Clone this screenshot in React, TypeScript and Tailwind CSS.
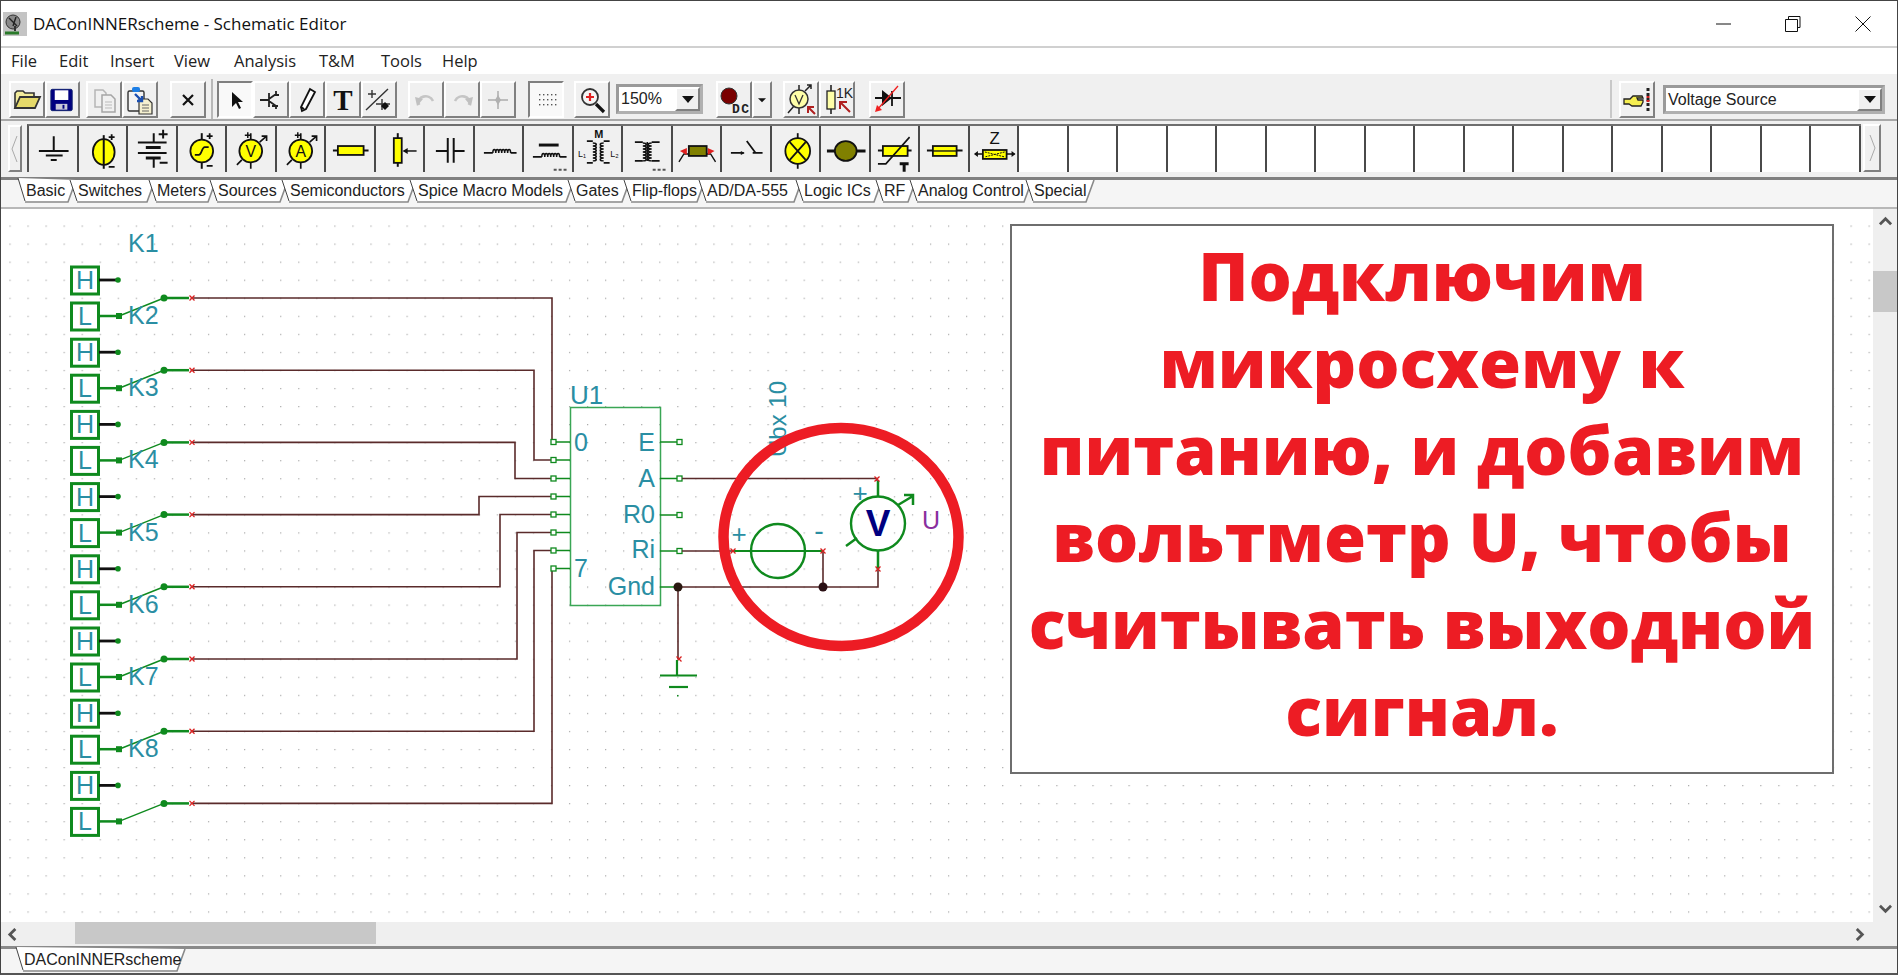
import React from "react";

const G = "#0f8a1e";
const T = "#2a8ea3";
const B = "#5a2b2b";
const Y = "#ffff00";
const K = "#111";

const Raised = "border-t-2 border-l-2 border-b-2 border-r-2 border-t-white border-l-white border-b-[#808080] border-r-[#808080] bg-[#f0f0f0]";
const Sunk = "border-t-2 border-l-2 border-b-2 border-r-2 border-t-[#808080] border-l-[#808080] border-b-white border-r-white bg-[#f9f9f9]";

function Btn({ ml, sel, w, children }: { ml?: string; sel?: boolean; w?: string; children?: React.ReactNode }) {
  return (
    <div className={`${w ?? "w-[36px]"} h-[37px] shrink-0 ${ml ?? ""} ${sel ? Sunk : Raised}`}>
      <svg viewBox="0 0 32 33" className="w-full h-full">{children}</svg>
    </div>
  );
}

const toolbarA = (
  <>
    <Btn>
      <path d="M4 25V10l2-2h6l2 2h9v4" fill="#f3ec9c" stroke="#333" strokeWidth="1.6" />
      <path d="M4 25l5-11h20l-5 11z" fill="#e6da6a" stroke="#333" strokeWidth="1.8" />
    </Btn>
    <Btn w="w-[35px]">
      <rect x="4" y="6" width="22" height="22" rx="1.5" fill="#000080" stroke="#102070" />
      <rect x="8" y="7" width="14" height="10" fill="#fff" />
      <rect x="9" y="21" width="12" height="6" fill="#c8c8d8" />
      <rect x="16" y="22" width="2" height="4" fill="#000080" />
    </Btn>
    <Btn ml="ml-[6px]">
      <path d="M7 7h8l3 3v14H7z" fill="none" stroke="#b5b5b5" strokeWidth="1.5" />
      <path d="M14 12h9l4 4v13H14z" fill="#f0f0f0" stroke="#a5a5a5" strokeWidth="1.5" />
      <path d="M17 19h7M17 22h7M17 25h7" stroke="#bbb" />
    </Btn>
    <Btn>
      <rect x="4" y="8" width="16" height="20" rx="1.5" fill="#f4f4f4" stroke="#333" strokeWidth="1.4" />
      <rect x="8" y="4" width="8" height="5" rx="2" fill="#1d7fe6" />
      <path d="M15 27V16h9l4 4v11H15z" fill="#f5f0d0" stroke="#333" strokeWidth="1.2" />
      <path d="M18 22h7M18 25h7M18 28h7" stroke="#666" />
      <path d="M11 11l7 7m0-5v5h-5" fill="none" stroke="#1b4fb0" strokeWidth="2.4" />
    </Btn>
    <Btn ml="ml-[12px]">
      <path d="M11 12l10 10M21 12L11 22" stroke="#111" strokeWidth="2.2" />
    </Btn>
    <div className="w-[2px] h-[40px] ml-[5px] mr-[4px] bg-[#b8b8b8] shrink-0" />
    <Btn sel>
      <path d="M13 9l0 15 4-4 3 6 2-1-3-6h5z" fill="#111" />
    </Btn>
    <Btn>
      <path d="M5 17h9M14 10v14M14 16l7-5v-3M14 18l7 5v3M24 12h-4M17 23h6" fill="none" stroke="#222" strokeWidth="1.8" />
    </Btn>
    <Btn>
      <path d="M19 6l5 3-9 17-4 2-1-4z" fill="#fff" stroke="#111" strokeWidth="1.8" />
      <path d="M10 24l3 2" stroke="#111" strokeWidth="2" />
    </Btn>
    <Btn>
      <text x="16" y="27" textAnchor="middle" fontFamily="'Liberation Serif', serif" fontWeight="700" fontSize="29" fill="#111">T</text>
    </Btn>
    <Btn>
      <path d="M5 11h8M9 7v8M3 27L25 6M19 16v11M13 21h14" fill="none" stroke="#333" strokeWidth="1.4" />
      <path d="M22 19l4 4-4 4-4-4z" fill="#111" />
    </Btn>
    <Btn ml="ml-[11px]">
      <path d="M9 22c-3-9 10-12 14-4" fill="none" stroke="#c5c5c5" strokeWidth="2.6" />
      <path d="M5 14l8 2-6 7z" fill="#c0c0c0" />
    </Btn>
    <Btn>
      <path d="M23 22c3-9-10-12-14-4" fill="none" stroke="#c5c5c5" strokeWidth="2.6" />
      <path d="M27 14l-8 2 6 7z" fill="#c0c0c0" />
    </Btn>
    <Btn>
      <path d="M6 17h20M16 8v18" stroke="#bdbdbd" strokeWidth="2" />
      <path d="M16 12l3 5-3 5-3-5z" fill="#b0b0b0" />
    </Btn>
    <Btn ml="ml-[12px]" sel>
      <g fill="#555">
        {[11, 16, 21].map((y) => [9, 13, 17, 21, 25].map((x) => <rect key={`${x}-${y}`} x={x} y={y} width="1.4" height="1.4" />))}
      </g>
    </Btn>
    <Btn ml="ml-[10px]">
      <path d="M20 21l8 8" stroke="#111" strokeWidth="3.2" />
      <circle cx="14" cy="14" r="8" fill="#f5f5f5" stroke="#333" strokeWidth="1.8" />
      <path d="M14 10v8M10 14h8" stroke="#e02020" strokeWidth="2.2" />
    </Btn>
  </>
);

function Combo({ text, w, ml, h }: { text: string; w: string; ml: string; h: string }) {
  return (
    <div className={`${w} ${h} ${ml} shrink-0 flex items-start bg-white border-[3px] border-[#9a9a9a] border-r-[#b0b0b0] border-b-[#b0b0b0] pl-[2px]`}>
      <span className="flex-1 text-[16px] leading-[24px] text-[#222] whitespace-nowrap">{text}</span>
      <div className={`w-[25px] h-full ${Raised} flex items-center justify-center`}>
        <svg viewBox="0 0 14 8" className="w-[12px] h-[7px]"><path d="M0 0h14L7 8z" fill="#111" /></svg>
      </div>
    </div>
  );
}

const toolbarB = (
  <>
    <Combo text="150%" w="w-[87px]" h="h-[30px]" ml="ml-[6px]" />
    <Btn ml="ml-[13px]">
      <circle cx="11" cy="13" r="8" fill="#7a0000" stroke="#333" />
      <text x="14" y="30" fontFamily="'Liberation Mono', monospace" fontWeight="700" fontSize="13" fill="#222" textLength="17">DC</text>
    </Btn>
    <Btn w="w-[20px]">
      <path d="M8 14h16l-8 8z" fill="#111" />
    </Btn>
    <Btn ml="ml-[11px]">
      <path d="M14 2v6M14 25v6M3 30l6-7M20 8l6-6m-4 0h4v4" fill="none" stroke="#222" strokeWidth="1.5" />
      <circle cx="14" cy="16" r="9" fill="#ffffa8" stroke="#333" strokeWidth="1.5" />
      <path d="M10 12l4 9 4-9" fill="none" stroke="#333" strokeWidth="1.3" />
      <path d="M30 31l-7-7m0 6v-6h6" fill="none" stroke="#b02020" strokeWidth="2" />
    </Btn>
    <Btn>
      <path d="M10 2v29" stroke="#222" strokeWidth="1.6" />
      <rect x="6" y="8" width="8" height="18" fill="#ffffa8" stroke="#222" strokeWidth="1.3" />
      <text x="15" y="15" fontFamily="'Liberation Sans', sans-serif" fontSize="14" fill="#222">1K</text>
      <path d="M29 29l-10-10m0 7v-7h7" fill="none" stroke="#b02020" strokeWidth="2" />
    </Btn>
    <Btn ml="ml-[14px]">
      <path d="M4 15h26M21 8v15" stroke="#111" strokeWidth="1.8" />
      <path d="M11 7l10 8-10 8z" fill="#111" />
      <path d="M27 3L6 27" stroke="#f02020" strokeWidth="1.4" />
      <path d="M4 29l2-7 5 5z" fill="#f02020" />
    </Btn>
    <div className="flex-1 self-stretch border-r-2 border-r-[#c8c8c8]" />
    <Btn ml="ml-[7px]">
      <path d="M3 16h6l3-3h9l1 2h-6l1 2h5v2l-1 2-1 2h-9l-3-2H3z" fill="#f5ee50" stroke="#222" strokeWidth="1.3" />
      <path d="M27 5v24" stroke="#222" strokeWidth="3" strokeDasharray="3 2" />
      <path d="M27 13v6" stroke="#d02020" strokeWidth="3" strokeDasharray="2 2" />
    </Btn>
    <Combo text="Voltage Source" w="w-[222px]" h="h-[29px]" ml="ml-[8px]" />
    <div className="w-[12px] shrink-0" />
  </>
);

const ic = (c: React.ReactNode) => c;
const Lbl = ({ x, y, t, s = 9, a = "middle" as const, w = 400 }: { x: number; y: number; t: string; s?: number; a?: "middle" | "start"; w?: number }) => (
  <text x={x} y={y} textAnchor={a} fontSize={s} fontWeight={w} fontFamily="'Liberation Sans', sans-serif" fill={K}>{t}</text>
);
const Coil = ({ x, y, n }: { x: number; y: number; n: number }) => (
  <path d={`M${x} ${y}` + Array.from({ length: n }).map(() => "a1.5 3.5 0 0 1 3 0").join("")} fill="none" stroke={K} strokeWidth="1.5" />
);
const VCoil = ({ x, y, n, dir }: { x: number; y: number; n: number; dir: 0 | 1 }) => (
  <path d={`M${x} ${y}` + Array.from({ length: n }).map(() => `a3.5 1.5 0 0 ${dir} 0 3`).join("")} fill="none" stroke={K} strokeWidth="1.5" />
);

const paletteIcons: React.ReactNode[] = [
  ic(<g stroke={K} strokeWidth="2"><path d="M25 10v15M10 25h30M17 29.500h17M22 34h6" /></g>),
  ic(<g><ellipse cx="25" cy="26" rx="11" ry="13" fill={Y} stroke={K} strokeWidth="1.8" /><path d="M25 9v34" stroke={K} strokeWidth="2" /><path d="M30 11h6M33 8v6M30 41h6" stroke={K} strokeWidth="1.8" /></g>),
  ic(<g stroke={K}><path d="M26 7v9M26 32v10" strokeWidth="2" /><path d="M10 16.500h29M10 27h29" strokeWidth="2" /><path d="M18 21.500h15M18 32h15" strokeWidth="3" /><path d="M31 8h9M35.500 3.500v9M32 37h8" strokeWidth="2" /></g>),
  ic(<g><path d="M24 7v36" stroke={K} strokeWidth="2" /><circle cx="24" cy="25" r="11.500" fill={Y} stroke={K} strokeWidth="1.8" /><path d="M17 29h4c3 0 3-8 6-8h4" fill="none" stroke={K} strokeWidth="1.8" /><path d="M29 10h6M32 7v6M29 40h6" stroke={K} strokeWidth="1.8" /></g>),
  ic(<g><path d="M24 7v36M10 39l5-5M33 16l7-6m-5 0h5v5" fill="none" stroke={K} strokeWidth="1.7" /><circle cx="24" cy="25" r="11.500" fill={Y} stroke={K} strokeWidth="1.8" /><path d="M18 9h6M21 6v6" stroke={K} strokeWidth="1.5" /><text x="24" y="31" textAnchor="middle" fontSize="16" fontFamily="'Liberation Sans', sans-serif" fill={K}>V</text></g>),
  ic(<g><path d="M24 7v36M10 39l5-5M33 16l7-6m-5 0h5v5" fill="none" stroke={K} strokeWidth="1.7" /><circle cx="24" cy="25" r="11.500" fill={Y} stroke={K} strokeWidth="1.8" /><path d="M18 9h6M21 6v6" stroke={K} strokeWidth="1.5" /><text x="24" y="31" textAnchor="middle" fontSize="16" fontFamily="'Liberation Sans', sans-serif" fill={K}>A</text></g>),
  ic(<g><path d="M7 24.500h36" stroke={K} strokeWidth="2" /><rect x="12" y="20" width="26" height="9" fill={Y} stroke={K} strokeWidth="1.8" /></g>),
  ic(<g><path d="M22 7v34" stroke={K} strokeWidth="2" /><rect x="18" y="12" width="8" height="25" fill={Y} stroke={K} strokeWidth="1.8" /><path d="M28 25h13" stroke={K} strokeWidth="1.5" /><path d="M27 25l5-3v6z" fill={K} /></g>),
  ic(<g stroke={K} strokeWidth="2"><path d="M11 25h12M29 25h11M23 12v25M29 12v25" /></g>),
  ic(<g><path d="M9 27h9M36 27h6" stroke={K} strokeWidth="1.8" /><Coil x={18} y={27} n={6} /></g>),
  ic(<g><path d="M15 19h20" stroke={K} strokeWidth="3" /><path d="M9 31h9M36 31h7" stroke={K} strokeWidth="1.8" /><Coil x={18} y={31} n={6} /><path d="M30 44h3M35 44h3M40 44h3" stroke="#555" strokeWidth="2" /></g>),
  ic(<g><Lbl x={25} y={12} t="M" s={11} w={700} /><path d="M13 15h6M13 37h6M36 15h-6M36 37h-6" stroke={K} strokeWidth="1.8" /><VCoil x={19} y={17} n={6} dir={1} /><VCoil x={30} y={17} n={6} dir={0} /><Lbl x={8} y={31} t="L₁" s={9} /><Lbl x={41} y={31} t="L₂" s={9} /></g>),
  ic(<g><path d="M12 16h8M12 35h8M37 16h-8M37 35h-8" stroke={K} strokeWidth="1.8" /><VCoil x={20} y={17} n={6} dir={1} /><VCoil x={29} y={17} n={6} dir={0} /><path d="M24.500 16v19" stroke={K} strokeWidth="1.5" /><path d="M30 44h3M35 44h3M40 44h3" stroke="#555" strokeWidth="2" /></g>),
  ic(<g><path d="M6 36l5-8h5M43 36l-5-8h-5" fill="none" stroke={K} strokeWidth="1.4" /><path d="M7 25l7-3v7zM42 25l-7-3v7z" fill="#e02020" /><rect x="16" y="20" width="18" height="10" fill="#808000" stroke={K} strokeWidth="1.8" /></g>),
  ic(<g><path d="M9 27h13M31 27h10M25 15l9 12" stroke={K} strokeWidth="1.8" fill="none" /><path d="M23 27l-4-2v4z" fill={K} /></g>),
  ic(<g><path d="M26 7v36" stroke={K} strokeWidth="1.8" /><ellipse cx="26" cy="25" rx="12.500" ry="13" fill={Y} stroke={K} strokeWidth="1.8" /><path d="M18 16l16 18M34 16L18 34" stroke={K} strokeWidth="1.8" /></g>),
  ic(<g><path d="M6 25h10M35 25h10" stroke={K} strokeWidth="3" /><ellipse cx="25" cy="25" rx="11" ry="10" fill="#808000" stroke={K} strokeWidth="1.8" /></g>),
  ic(<g><path d="M7 24.500h34" stroke={K} strokeWidth="2" /><rect x="12" y="20" width="25" height="10" fill={Y} stroke={K} strokeWidth="1.8" /><path d="M7 38h8L39 11" fill="none" stroke={K} strokeWidth="1.6" /><path d="M29 38h9M33.500 38v8" stroke={K} strokeWidth="3" /></g>),
  ic(<g><path d="M7 24.500h36" stroke={K} strokeWidth="2" /><rect x="13" y="20" width="24" height="10" fill={Y} stroke={K} strokeWidth="1.8" /><path d="M13 25h24" stroke={K} strokeWidth="1.4" /></g>),
  ic(<g><Lbl x={25} y={18} t="Z" s={17} /><path d="M5 28h40" stroke={K} strokeWidth="1.6" /><path d="M4 28l4-3v6zM46 28l-4-3v6z" fill={K} /><rect x="13" y="24" width="24" height="9" fill={Y} stroke={K} strokeWidth="1.8" /><path d="M15 26l20 5M35 26l-20 5" stroke={K} strokeDasharray="2 1" /></g>),
];

const tabs: [string, number][] = [
  ["Basic", 52], ["Switches", 79], ["Meters", 61], ["Sources", 72], ["Semiconductors", 128], ["Spice Macro Models", 158],
  ["Gates", 56], ["Flip-flops", 75], ["AD/DA-555", 97], ["Logic ICs", 80], ["RF", 34], ["Analog Control", 116], ["Special", 62],
];

function Tab({ t, w, sel, h = 23 }: { t: string; w: number; sel?: boolean; h?: number }) {
  return (
    <div className="relative shrink-0" style={{ width: w, height: h }}>
      <svg className="absolute top-0 left-[-9px] overflow-visible" width={w + 14} height={h}>
        <path d={`M1 ${sel ? -2 : 0}L8 ${h - 2}H${w - 1}L${w + 7} 0`} fill="#fff" stroke="none" />
        <path d={`M1 ${sel ? -2 : 0}L8 ${h - 2}`} fill="none" stroke="#444" strokeWidth="1" />
        <path d={`M8 ${h - 1}H${w - 1}L${w + 7} 0`} fill="none" stroke="#8a8a8a" strokeWidth="1.6" />
      </svg>
      <span className="relative block text-[16px] leading-[22px] text-[#222] whitespace-nowrap">{t}</span>
    </div>
  );
}

function Chevron({ d }: { d: "u" | "d" | "l" | "r" }) {
  const path = { u: "M1 9l6-6 6 6", d: "M1 3l6 6 6-6", l: "M9 1L3 7l6 6", r: "M3 1l6 6-6 6" }[d];
  return (
    <svg viewBox="0 0 14 14" className="w-[13px] h-[13px]"><path d={path} fill="none" stroke="#555" strokeWidth="3" /></svg>
  );
}

const pitch = 72.2;
const sw = [0, 1, 2, 3, 4, 5, 6, 7];
const pinY = [443, 461, 479.5, 497.5, 515.5, 533.5, 551.5, 569.5];
const wires: [number, number][] = [
  [552, 443], [534, 461], [515, 479.5], [479, 497.5], [500, 515.5], [517, 533.5], [534, 551.5], [552, 569.5],
];

function X({ x, y }: { x: number; y: number }) {
  return <path d={`M${x - 2.500} ${y - 2.500}l5 5m0-5l-5 5`} stroke="#d92020" strokeWidth="1.3" />;
}
function Txt({ x, y, t, s = 24, c = T, a = "start" }: { x: number; y: number; t: string; s?: number; c?: string; a?: "start" | "end" | "middle" }) {
  return <text x={x} y={y} fontSize={s} fill={c} textAnchor={a} fontFamily="'Liberation Sans', sans-serif">{t}</text>;
}

function Schematic() {
  return (
    <svg className="absolute inset-0" width="1872" height="714" viewBox="1 210 1872 714">
      <defs>
        <pattern id="grid" x="45.500" y="226.500" width="18.050" height="18.050" patternUnits="userSpaceOnUse">
          <rect width="1.200" height="1.200" fill="#a8a8a8" />
        </pattern>
      </defs>
      <rect x="1" y="212" width="1872" height="711" fill="url(#grid)" />
      <Txt x={128} y={253} t="K1" s={25} />
      {sw.map((k) => {
        const d = k * pitch;
        const [vx, py] = wires[k];
        const wy = 299 + d;
        return (
          <g key={k}>
            <path d={`M193 ${wy}H${vx}V${py}H553`} fill="none" stroke={B} strokeWidth="1.600" />
            <rect x={71.500} y={268 + d} width="27" height="27" fill="#fff" stroke={G} strokeWidth="3" />
            <rect x={71.500} y={304 + d} width="27" height="27" fill="#fff" stroke={G} strokeWidth="3" />
            <Txt x={85} y={290 + d} t="H" s={25} a="middle" />
            <Txt x={85} y={326 + d} t="L" s={25} a="middle" />
            <path d={`M99 ${281 + d}H116`} stroke="#111" strokeWidth="2.800" />
            <circle cx={118} cy={281 + d} r="2.800" fill={G} />
            <path d={`M99 ${317 + d}H118`} stroke={G} strokeWidth="2.500" />
            <rect x={116} y={314 + d} width="6" height="6" fill={G} />
            <path d={`M119 ${317 + d}L164 ${wy}`} stroke={G} strokeWidth="1.500" />
            <path d={`M164 ${wy}H189`} stroke={G} strokeWidth="2.500" />
            <circle cx={164} cy={wy} r="3.500" fill={G} />
            <X x={192} y={wy} />
            {k < 7 && <Txt x={128} y={325 + d} t={`K${k + 2}`} s={25} />}
          </g>
        );
      })}

      <rect x="570.500" y="408.500" width="90" height="198" fill="none" stroke="#3aa655" strokeWidth="1.500" />
      {pinY.map((y) => (
        <g key={y}>
          <path d={`M555 ${y}H570`} stroke={G} strokeWidth="1.500" />
          <rect x="551" y={y - 2.500} width="5" height="5" fill="#fff" stroke={G} strokeWidth="1.300" />
        </g>
      ))}
      {[443, 479.5, 516, 552].map((y) => (
        <g key={y}>
          <path d={`M660 ${y}H677`} stroke={G} strokeWidth="1.500" />
          <rect x="677" y={y - 2.500} width="5" height="5" fill="#fff" stroke={G} strokeWidth="1.300" />
        </g>
      ))}
      <path d="M660 588H676" stroke={G} strokeWidth="1.500" />
      <Txt x={570} y={405} t="U1" s={26} />
      <Txt x={574} y={452} t="0" s={25} />
      <Txt x={574} y={578} t="7" s={25} />
      <Txt x={655} y={452} t="E" s={25} a="end" />
      <Txt x={655} y={488} t="A" s={25} a="end" />
      <Txt x={655} y={524} t="R0" s={25} a="end" />
      <Txt x={655} y={559} t="Ri" s={25} a="end" />
      <Txt x={655} y={596} t="Gnd" s={25} a="end" />

      <g transform="rotate(-90 786 458)"><Txt x={786} y={458} t="Ubx 10" s={24} /></g>

      <path d="M682 479.500H877V482M682 552H733M823 552V588M678 588H878V570M678 588V660" fill="none" stroke={B} strokeWidth="1.600" />
      <path d="M733 552H823" stroke={G} strokeWidth="2.200" />
      <circle cx="778" cy="552" r="27" fill="none" stroke={G} strokeWidth="2.400" />
      <path d="M878 482V497M878 552V570" stroke={G} strokeWidth="2.500" />
      <circle cx="878" cy="524.500" r="27" fill="#fff" fillOpacity="0" stroke={G} strokeWidth="2.400" />
      <path d="M846 547l11-8M898 506l15-9m-9-1h9v10" fill="none" stroke={G} strokeWidth="2.500" />
      <text x="878" y="537" textAnchor="middle" fontSize="37" fontWeight="700" fill="#000080" fontFamily="'Liberation Sans', sans-serif">V</text>
      <Txt x={739} y={544} t="+" s={26} a="middle" />
      <Txt x={819} y={541} t="-" s={28} a="middle" />
      <Txt x={860} y={503} t="+" s={26} a="middle" />
      <Txt x={922} y={530} t="U" s={25} c="#8a2f9e" />
      <X x={877} y={480} /><X x={733} y={552} /><X x={823} y={552} /><X x={878} y={570} /><X x={679} y={660} />
      <circle cx="678" cy="588" r="4.500" fill="#2a1810" />
      <circle cx="823" cy="588" r="4.500" fill="#2a0f14" />
      <path d="M677 661V676M660 676.500H697" stroke={G} strokeWidth="2.200" />
      <path d="M669 688H688" stroke={G} strokeWidth="2.200" />
      <rect x="677" y="696" width="1.500" height="1.500" fill={G} />
      <ellipse cx="841" cy="538" rx="117.500" ry="109" fill="none" stroke="#ed1c24" strokeWidth="10.500" />
    </svg>
  );
}

export default function App() {
  return (
    <div className="w-[1898px] h-[975px] flex flex-col overflow-hidden bg-white border-x border-x-[#444] border-t border-t-[#444] border-b-2 border-b-[#555] font-['Liberation_Sans',sans-serif]">
      {/* title bar */}
      <div className="h-[47px] shrink-0 flex items-center border-b-2 border-b-[#d0d0d0] pl-[2px]">
        <svg viewBox="0 0 24 24" className="w-[24px] h-[24px]">
          <rect width="24" height="24" fill="#c4c4c4" />
          <circle cx="10" cy="10" r="7" fill="#8a8a8a" stroke="#333" />
          <path d="M6 6l8 8M13 5l-3 9" stroke="#222" strokeWidth="1.400" />
          <path d="M2 21h14" stroke="#2a7a2a" strokeWidth="3" />
          <path d="M12 14v5" stroke="#333" strokeWidth="2" />
        </svg>
        <span className="ml-[6px] font-['Open_Sans',sans-serif] text-[17px] text-[#111] whitespace-nowrap">DAConINNERscheme - Schematic Editor</span>
        <div className="flex-1" />
        <svg viewBox="0 0 16 16" className="w-[16px] h-[16px]"><path d="M0 8h15" stroke="#111" strokeWidth="1" /></svg>
        <svg viewBox="0 0 16 16" className="w-[16px] h-[16px] ml-[53px]"><path d="M3.500 3.500v-3h11.500v11h-3M.500 3.500h12v12h-12z" fill="none" stroke="#111" /></svg>
        <svg viewBox="0 0 16 16" className="w-[16px] h-[16px] ml-[54px] mr-[26px]"><path d="M.500.500l15 15m0-15l-15 15" stroke="#111" /></svg>
      </div>
      {/* menu */}
      <div className="h-[26px] shrink-0 flex items-center pl-[10px] font-['Open_Sans',sans-serif] text-[16.500px] text-[#222]">
        <span className="w-[48px]">File</span>
        <span className="w-[51px]">Edit</span>
        <span className="w-[64px]">Insert</span>
        <span className="w-[60px]">View</span>
        <span className="w-[85px]">Analysis</span>
        <span className="w-[62px]">T&amp;M</span>
        <span className="w-[61px]">Tools</span>
        <span>Help</span>
      </div>
      {/* toolbar */}
      <div className="h-[47px] shrink-0 flex items-center bg-[#f0f0f0] pl-[8px] pt-[6px] pb-[1px] border-b-2 border-b-[#a8a8a8]">
        {toolbarA}
        {toolbarB}
      </div>
      {/* palette */}
      <div className="h-[59px] shrink-0 flex items-start bg-[#f0f0f0] pl-[7px] pt-[3px] border-b-[3px] border-b-[#808080]">
        <div className={`w-[14px] h-[47px] shrink-0 mt-[1px] ${Raised} flex items-center justify-center`}>
          <svg viewBox="0 0 8 28" className="w-[8px] h-[28px]"><path d="M6 1L1 14l5 13" fill="none" stroke="#aaa" /></svg>
        </div>
        <div className="ml-[5px] flex border-t-2 border-t-[#6e6e6e] h-[48px] shrink-0 border-l-2 border-l-[#555]">
          {Array.from({ length: 37 }).map((_, i) => (
            <div key={i} className={`w-[49.500px] h-full shrink-0 border-r-2 border-r-[#4a4a4a] ${i < 20 ? "bg-[#f0f0f0]" : "bg-white"}`}>
              {paletteIcons[i] && <svg viewBox="0 0 48 46" className="w-full h-full">{paletteIcons[i]}</svg>}
            </div>
          ))}
        </div>
        <div className={`w-[18px] h-[48px] shrink-0 ml-[2px] ${Raised} flex items-center justify-center`}>
          <svg viewBox="0 0 8 28" className="w-[8px] h-[28px]"><path d="M2 1l5 13-5 13" fill="none" stroke="#aaa" /></svg>
        </div>
      </div>
      {/* tabs */}
      <div className="h-[29px] shrink-0 flex items-start pl-[25px] bg-[#f5f5f5] border-b-2 border-b-[#b8b8b8]">
        {tabs.map(([t, w], i) => <Tab key={t} t={t} w={w} sel={i === 0} />)}
      </div>
      {/* canvas */}
      <div className="flex-1 min-h-0 flex">
        <div className="relative w-[1872px] h-full bg-white">
          <Schematic />
          <div className="absolute left-[1009px] top-[15px] w-[824px] h-[550px] bg-white border-2 border-[#6e6e6e] pt-[5px] text-center text-[#ed1c24] font-['Open_Sans',sans-serif] font-extrabold text-[68px] leading-[87px] whitespace-nowrap">
            Подключим<br />микросхему к<br />питанию, и добавим<br />вольтметр U, чтобы<br />считывать выходной<br />сигнал.
          </div>
        </div>
        <div className="w-[24px] h-full bg-[#efefef] flex flex-col items-center">
          <div className="h-[62px] shrink-0 pt-[7px]"><Chevron d="u" /></div>
          <div className="w-full h-[41px] shrink-0 bg-[#c8c8c8]" />
          <div className="flex-1" />
          <div className="mb-[6px]"><Chevron d="d" /></div>
        </div>
      </div>
      {/* horizontal scrollbar */}
      <div className="h-[24px] shrink-0 bg-[#efefef] flex items-center pl-[6px] pr-[30px]">
        <Chevron d="l" />
        <div className="ml-[55px] w-[301px] h-[22px] self-start bg-[#c8c8c8]" />
        <div className="flex-1" />
        <Chevron d="r" />
      </div>
      {/* bottom tabs */}
      <div className="h-[27px] shrink-0 flex items-start pl-[23px] bg-[#f5f5f5] border-t-[3px] border-t-[#8a8a8a]">
        <Tab t="DAConINNERscheme" w={163} sel h={23} />
      </div>
    </div>
  );
}
